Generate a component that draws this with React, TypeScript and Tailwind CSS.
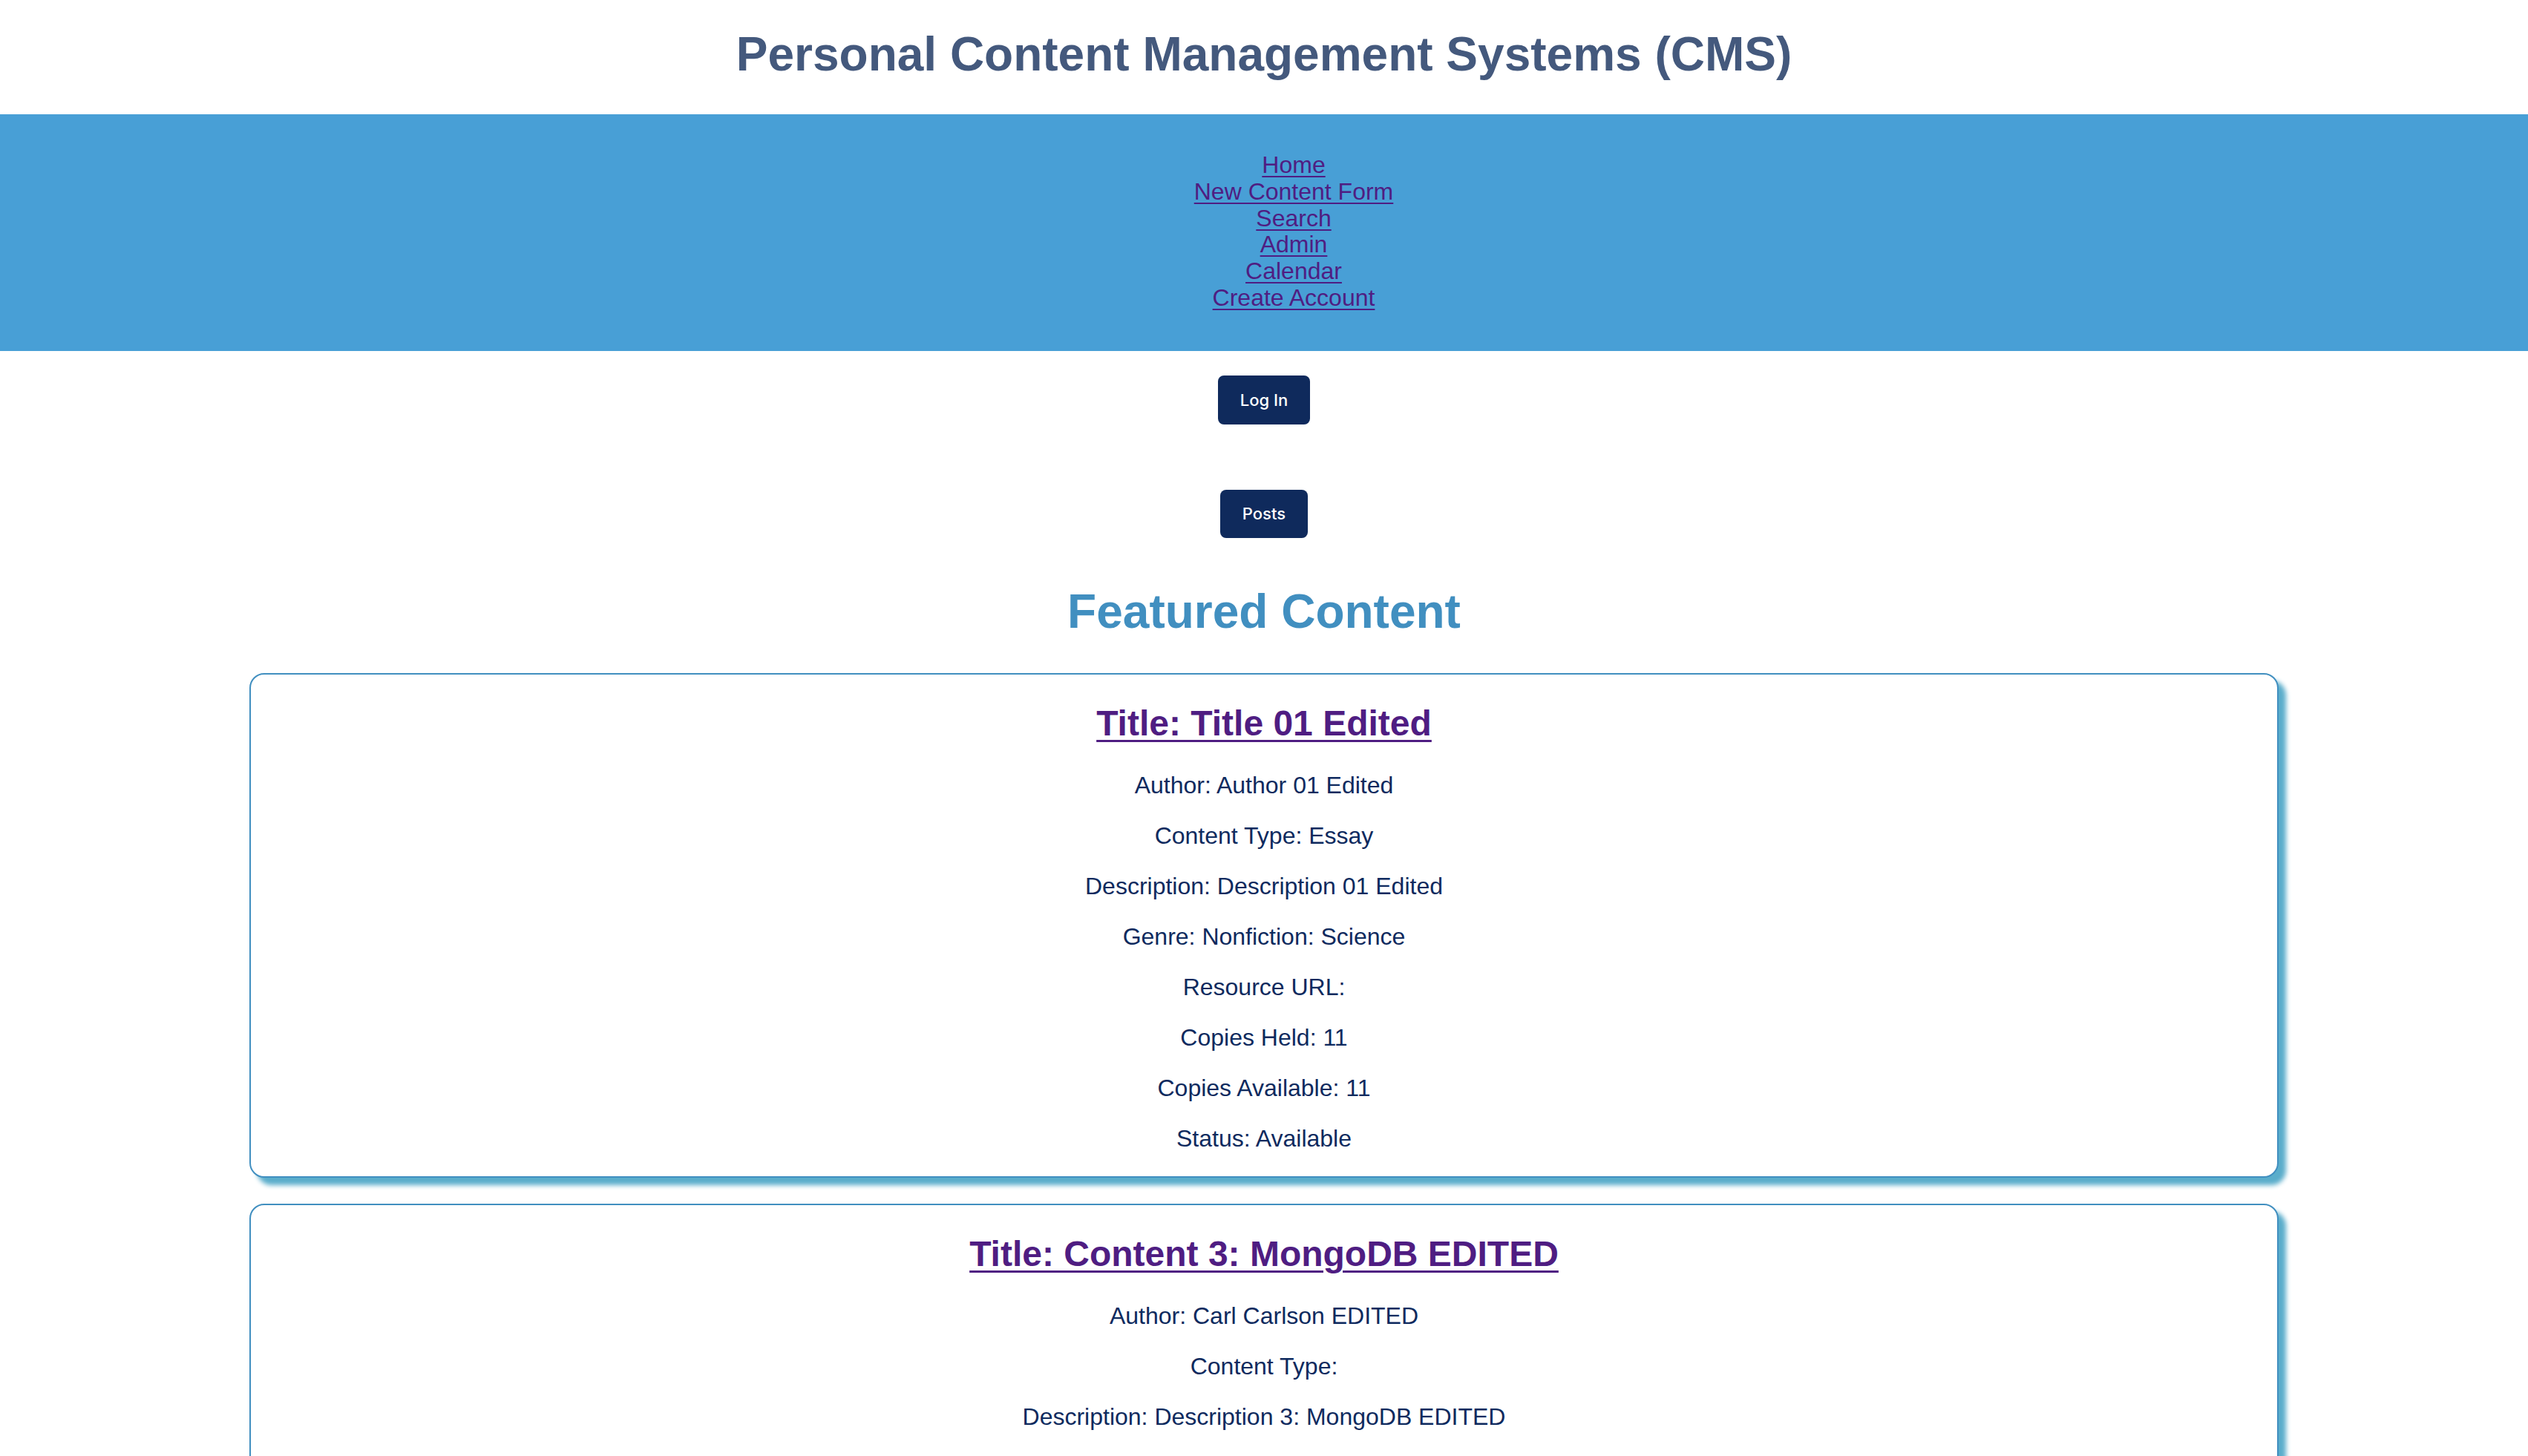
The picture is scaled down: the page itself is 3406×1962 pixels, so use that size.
import React from "react";

const navLinks = ["Home", "New Content Form", "Search", "Admin", "Calendar", "Create Account"];

type Item = { title: string; fields: string[] };

const items: Item[] = [
  {
    title: "Title: Title 01 Edited",
    fields: [
      "Author: Author 01 Edited",
      "Content Type: Essay",
      "Description: Description 01 Edited",
      "Genre: Nonfiction: Science",
      "Resource URL:",
      "Copies Held: 11",
      "Copies Available: 11",
      "Status: Available",
    ],
  },
  {
    title: "Title: Content 3: MongoDB EDITED",
    fields: [
      "Author: Carl Carlson EDITED",
      "Content Type:",
      "Description: Description 3: MongoDB EDITED",
      "Genre:",
      "Resource URL:",
      "Copies Held: 3",
      "Copies Available: 3",
      "Status: Available",
    ],
  },
];

function Card({ item }: { item: Item }) {
  return (
    <div className="mx-auto w-[2734px] rounded-[20px] border-2 border-[#418fc0] bg-white pt-[38px] pb-[33px] text-center shadow-[10px_10px_6px_#5aadcb]">
      <h2 className="text-[48px] font-bold leading-[55px]">
        <a href="#" className="text-[#4f1d82] underline decoration-[3px] underline-offset-[6px]">
          {item.title}
        </a>
      </h2>
      <div className="mt-[38px] flex flex-col gap-[32px]">
        {item.fields.map((f) => (
          <p key={f} className="text-[32px] leading-[36px] text-[#0e2a5e]">
            {f}
          </p>
        ))}
      </div>
    </div>
  );
}

export default function App() {
  return (
    <div className="min-h-screen bg-white font-['Liberation_Sans',Arial,sans-serif]">
      <header className="pt-[37px] pb-[44px] text-center">
        <h1 className="text-[64px] font-bold leading-[73px] text-[#44597d]">
          Personal Content Management Systems (CMS)
        </h1>
      </header>
      <nav className="bg-[#489fd6] pt-[51px] pb-[53px]">
        <ul className="flex flex-col items-center pl-[80px]">
          {navLinks.map((l) => (
            <li key={l} className="text-[32px] leading-[35.8px]">
              <a href="#" className="text-[#4f1d82] underline decoration-[2px] underline-offset-[4px]">
                {l}
              </a>
            </li>
          ))}
        </ul>
      </nav>
      <div className="mt-[33px] flex flex-col items-center">
        <button className="rounded-[8px] bg-[#0f2a5c] px-[30px] py-[20px] font-['Inter',sans-serif] text-[22px] font-medium leading-[26px] text-white">
          Log In
        </button>
        <button className="mt-[88px] rounded-[8px] bg-[#0f2a5c] px-[30px] py-[20px] font-['Inter',sans-serif] text-[22px] font-medium leading-[25px] text-white">
          Posts
        </button>
      </div>
      <h2 className="mt-[63px] text-center text-[64px] font-bold leading-[73px] text-[#418fc0]">
        Featured Content
      </h2>
      <div className="mt-[46px] flex flex-col gap-[35px] pb-[60px]">
        {items.map((it) => (
          <Card key={it.title} item={it} />
        ))}
      </div>
    </div>
  );
}
